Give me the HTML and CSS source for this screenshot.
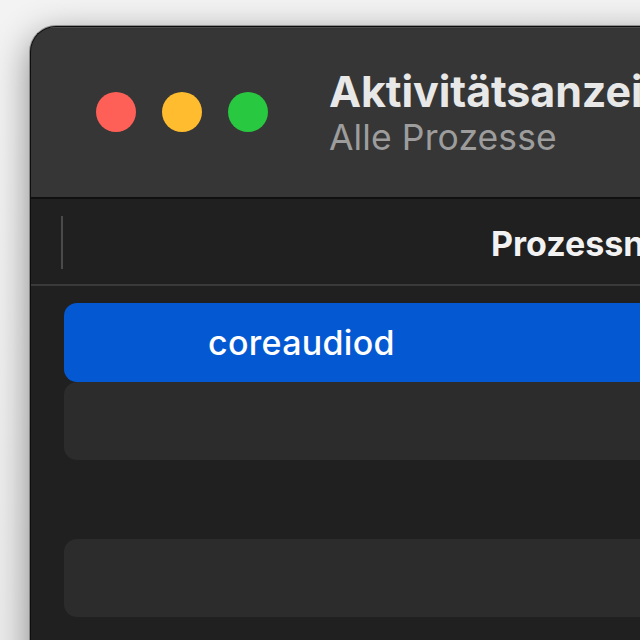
FILE: index.html
```html
<!DOCTYPE html>
<html lang="de">
<head>
<meta charset="utf-8">
<title>Aktivitätsanzeige</title>
<link rel="stylesheet" href="styles.css">
</head>
<body>
<div class="window">
  <div class="titlebar">
    <div class="lights">
      <span class="light red"></span>
      <span class="light yellow"></span>
      <span class="light green"></span>
    </div>
    <div class="titles">
      <div class="title">Aktivitätsanzeige</div>
      <div class="subtitle">Alle Prozesse</div>
    </div>
  </div>
  <div class="header">
    <span class="tick"></span>
    <span class="col-name">Prozessname</span>
  </div>
  <div class="list">
    <div class="row selected"><span class="name">coreaudiod</span></div>
    <div class="row alt"></div>
    <div class="row"></div>
    <div class="row alt"></div>
    <div class="row"></div>
  </div>
</div>
</body>
</html>
```
FILE: styles.css
```css
html, body {
  margin: 0;
  padding: 0;
  height: 100%;
  overflow: hidden;
}
body {
  background: linear-gradient(180deg, #f3f3f3 0%, #ececec 100%);
  font-family: Inter, "Noto Sans", sans-serif;
}
.window {
  margin: 26px 0 0 30px;
  width: 700px;
  height: 700px;
  border: 1px solid #0e0e0e;
  border-right: none;
  border-bottom: none;
  border-top-left-radius: 26px;
  background: #202020;
  overflow: hidden;
  box-shadow: 0 0 0 1px rgba(90, 90, 90, 0.55), 0 10px 36px rgba(0, 0, 0, 0.45);
}
.titlebar {
  height: 170px;
  background: #363636;
  border-bottom: 2px solid #101010;
  display: flex;
  align-items: center;
  box-shadow: inset 0 1px 0 #4c4c4c;
}
.lights {
  display: flex;
  gap: 26px;
  padding-left: 65px;
}
.light {
  width: 40px;
  height: 40px;
  border-radius: 50%;
  display: block;
}
.red { background: #fe5f57; }
.yellow { background: #febc2e; }
.green { background: #28c840; }
.titles {
  margin-left: 61px;
  display: flex;
  flex-direction: column;
  margin-top: 6px;
}
.title {
  font-size: 43px;
  font-weight: 700;
  color: #e8e8e8;
  line-height: 46px;
  white-space: nowrap;
  letter-spacing: -0.1px;
}
.subtitle {
  font-size: 35.5px;
  font-weight: 400;
  color: #9d9d9d;
  line-height: 48px;
  white-space: nowrap;
  letter-spacing: 0.1px;
}
.header {
  height: 85px;
  border-bottom: 2px solid #3a3a3a;
  display: flex;
  align-items: center;
  background: #202020;
}
.tick {
  display: block;
  width: 2px;
  height: 53px;
  background: #4a4a4a;
  margin-left: 30px;
  margin-top: 2px;
}
.col-name {
  margin-left: 428px;
  font-size: 34px;
  font-weight: 700;
  color: #f2f2f2;
  white-space: nowrap;
  margin-top: 4px;
}
.list {
  padding: 17px 0 0 33px;
  display: flex;
  flex-direction: column;
}
.row {
  height: 78.5px;
  border-radius: 13px 0 0 13px;
  display: flex;
  align-items: center;
}
.row.alt { background: #2c2c2c; }
.row.selected { background: #0459d2; }
.name {
  margin-left: 144px;
  font-size: 34px;
  font-weight: 500;
  color: #ffffff;
  white-space: nowrap;
  letter-spacing: 0.3px;
}
```
